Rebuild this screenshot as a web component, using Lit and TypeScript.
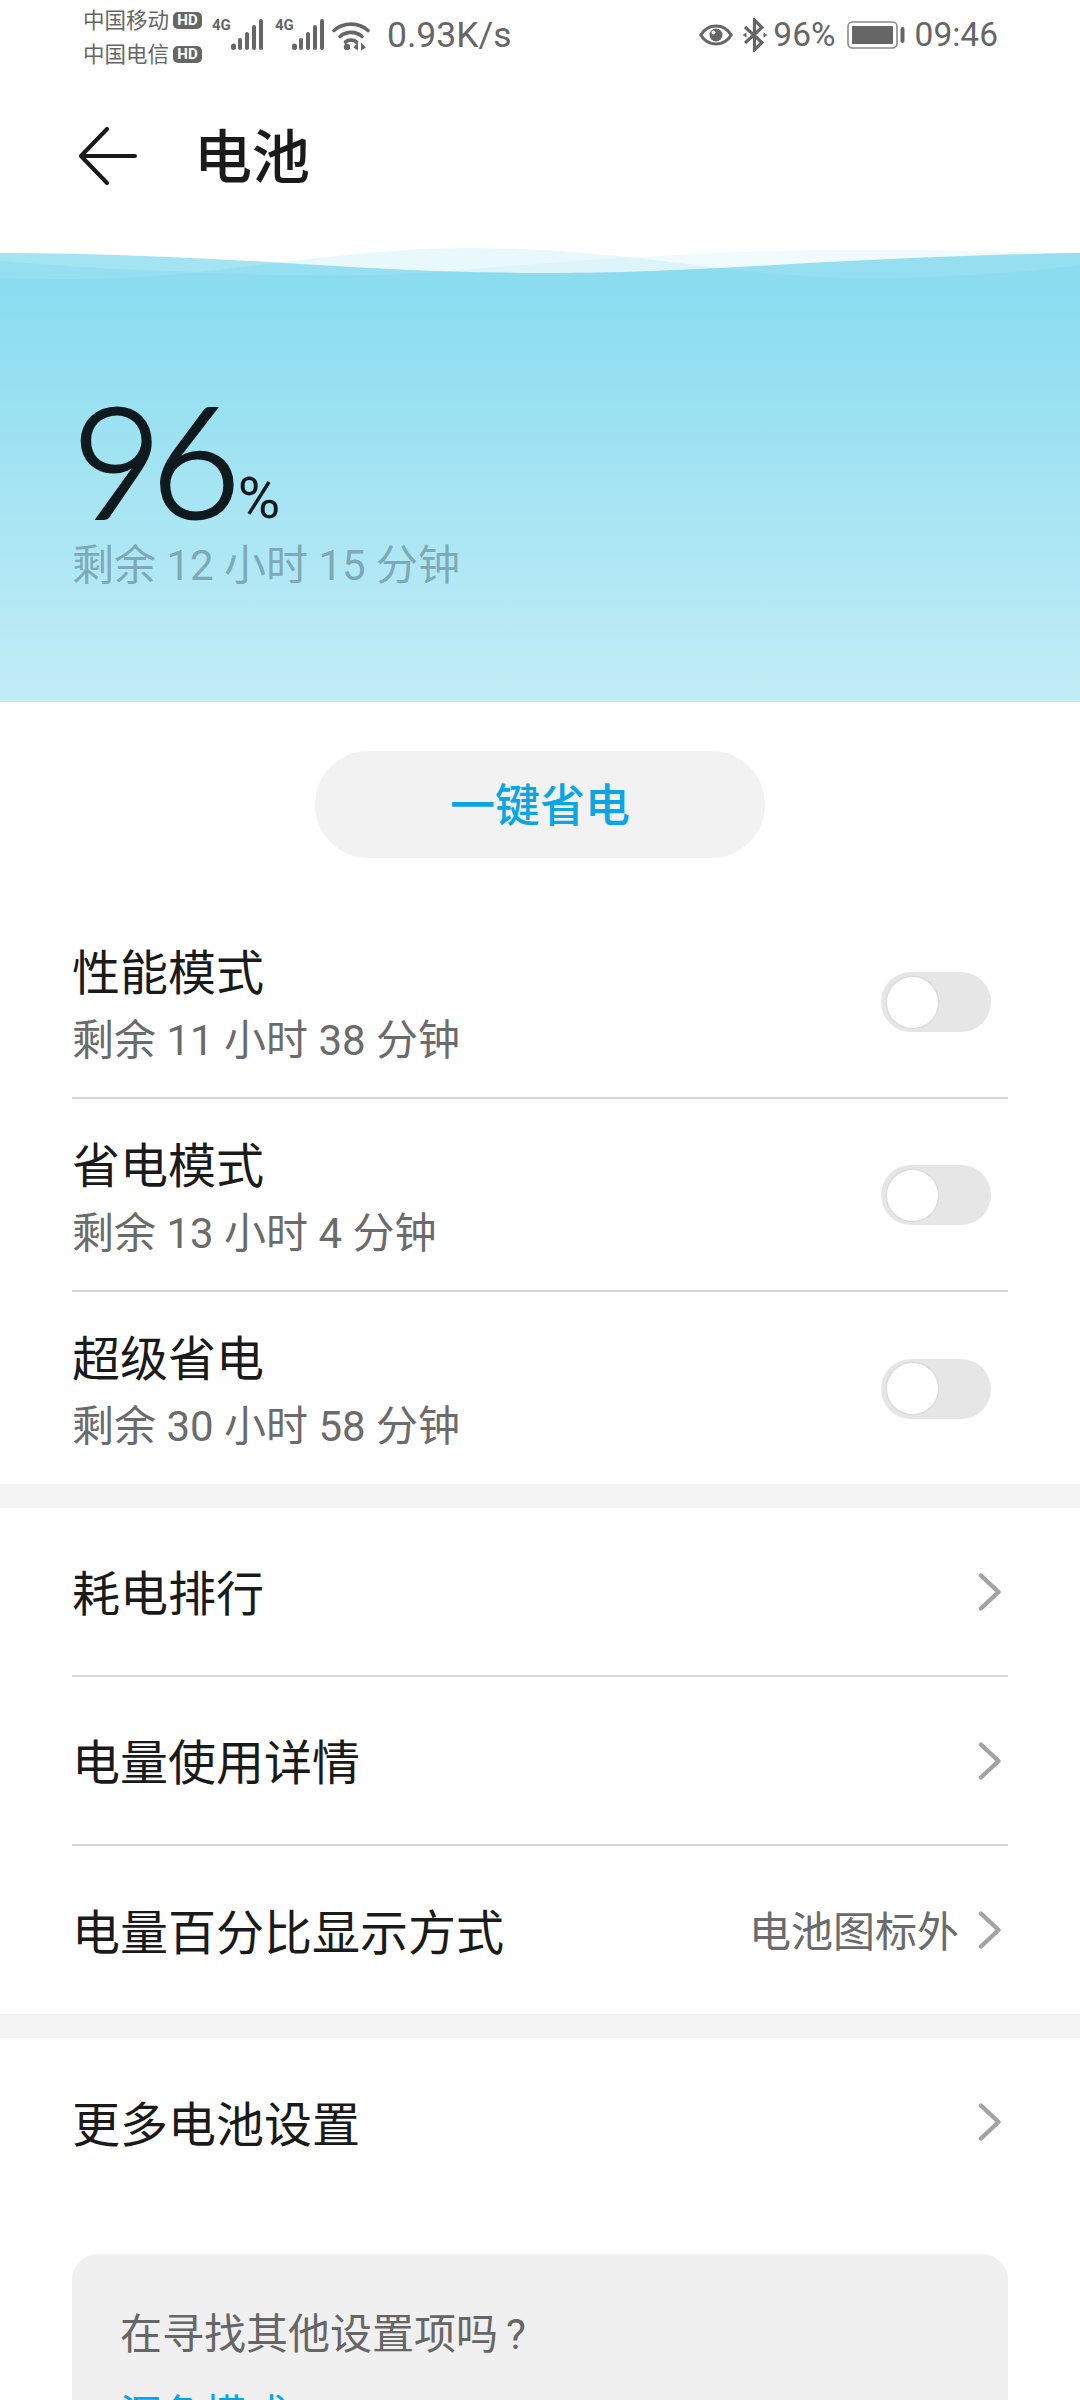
import { LitElement, css, html, svg } from "lit";
import { customElement } from "lit/decorators.js";

const mainEdge =
  "M0 253C90 253 180 257 270 262C360 268 450 273 540 273C610 273 660 271 720 268C830 262 950 255 1080 253V290H0Z";
const backEdge =
  "M0 278C60 280 130 280 200 272C290 262 380 248 470 248C560 248 640 258 720 268C790 276 840 279 890 278C960 277 1030 272 1080 265V290H0Z";
const farEdge =
  "M0 261C60 266 120 270 172 271C260 276 370 278 448 271C510 266 570 261 640 257C720 252 790 250 860 250C950 250 1020 252 1080 253V290H0Z";

const chevron = html`<svg class="chevron" viewBox="0 0 24 38" aria-hidden="true">
  <path d="M3 2.5 20.5 19 3 35.5" fill="none" stroke="#a3a3a3" stroke-width="4.4" stroke-linecap="round" stroke-linejoin="round" />
</svg>`;

const signal = html`<svg class="signal" viewBox="0 0 32 32" aria-hidden="true">
  <g fill="#666">
    <rect x="0" y="24.500" width="5" height="6.500" rx="2.500" />
    <rect x="7" y="19" width="4" height="12" rx="2" />
    <rect x="14" y="13" width="4" height="18" rx="2" />
    <rect x="21" y="6" width="4" height="25" rx="2" />
    <rect x="28" y="0" width="4" height="31" rx="2" />
  </g>
</svg>`;

@customElement("app-root")
export class AppRoot extends LitElement {
  static styles = css`
    :host {
      display: block;
      width: 1080px;
      height: 2400px;
      overflow: hidden;
      background: #fff;
      font-family: Roboto, "Noto Sans CJK SC", sans-serif;
      color: #1a1a1a;
    }

    .status {
      height: 70px;
      padding: 0 82px 0 83px;
      display: flex;
      justify-content: space-between;
      align-items: center;
      color: #666;
      box-sizing: border-box;
    }
    .status-left,
    .status-right {
      display: flex;
      align-items: center;
    }
    .carriers {
      display: flex;
      flex-direction: column;
      gap: 3px;
      font-size: 21.5px;
      line-height: 31px;
      margin-top: 4px;
    }
    .carrier {
      display: flex;
      align-items: center;
      gap: 4px;
    }
    .hd {
      width: 29px;
      height: 17px;
      border-radius: 5px;
      background: #666;
      color: #fff;
      font-size: 15px;
      line-height: 17px;
      font-weight: 700;
      text-align: center;
    }
    .net {
      display: flex;
      align-items: flex-end;
      height: 32px;
      position: relative;
      margin-left: 10px;
      padding-left: 19px;
    }
    .net + .net {
      margin-left: 12px;
      padding-left: 17px;
    }
    .net b {
      position: absolute;
      left: 0;
      top: -1px;
      font-size: 15px;
      line-height: 14px;
      font-weight: 700;
      letter-spacing: 0;
    }
    .signal {
      width: 32px;
      height: 32px;
      display: block;
    }
    .wifi {
      width: 38px;
      height: 30px;
      margin-left: 8px;
      margin-top: 2px;
      display: block;
    }
    .speed {
      font-size: 35.5px;
      margin-left: 17px;
      line-height: 40px;
    }
    .eye {
      width: 34px;
      height: 22px;
      display: block;
    }
    .bluetooth {
      width: 26px;
      height: 34px;
      margin-left: 9px;
      display: block;
    }
    .level {
      font-size: 33.5px;
      line-height: 40px;
      margin-left: 5px;
    }
    .battery {
      margin-left: 11px;
      display: block;
      width: 58px;
      height: 28px;
    }
    .clock {
      font-size: 33.5px;
      line-height: 40px;
      margin-left: 10px;
    }

    .toolbar {
      height: 175px;
      box-sizing: border-box;
      padding: 0 0 4px 79px;
      display: flex;
      align-items: center;
      gap: 57px;
    }
    .back {
      width: 58px;
      height: 58px;
      display: block;
    }
    .toolbar h1 {
      margin: 4px 0 0;
      font-size: 58px;
      line-height: 72px;
      font-weight: 500;
    }

    .wave {
      display: block;
      width: 1080px;
      height: 45px;
    }
    .hero {
      height: 412px;
      box-sizing: border-box;
      background: linear-gradient(#8adcf0, #c2edf6);
      padding: 88px 0 0 72px;
    }
    .reading {
      display: flex;
      align-items: baseline;
      height: 160px;
      color: #0f1a1e;
    }
    .reading .value {
      font-family: Lato, Roboto, sans-serif;
      font-size: 155px;
      line-height: 160px;
      font-weight: 300;
      letter-spacing: -11px;
      -webkit-text-stroke: 3px #0f1a1e;
    }
    .reading .unit {
      font-size: 58px;
      line-height: 58px;
      margin-left: 8px;
    }
    .hero .left {
      margin: 0;
      font-size: 42px;
      line-height: 56px;
      color: #7fa9b6;
    }

    .saver {
      display: flex;
      justify-content: center;
      padding: 49px 0 48px;
    }
    .saver button {
      width: 450px;
      height: 107px;
      border: none;
      border-radius: 54px;
      background: #f2f2f2;
      color: #0ba5e6;
      font: 500 45px "Noto Sans CJK SC", sans-serif;
      padding: 0 0 4px;
    }

    .modes,
    .links {
      padding: 0 72px;
    }
    .mode {
      height: 193px;
      box-sizing: border-box;
      border-bottom: 2px solid #d6d6d6;
      display: flex;
      align-items: center;
      justify-content: space-between;
      padding: 6px 17px 0 0;
    }
    .mode:last-child {
      height: 192px;
      border-bottom: none;
    }
    .mode .name {
      font-size: 48px;
      line-height: 64px;
      margin-top: 1px;
    }
    .mode .left {
      font-size: 42px;
      line-height: 56px;
      margin-top: 7px;
      color: #6b6b6b;
    }
    .switch {
      width: 110px;
      height: 60px;
      margin-top: -5px;
      border-radius: 30px;
      background: #e6e6e6;
      padding: 4.5px 6px;
      box-sizing: border-box;
    }
    .switch::before {
      content: "";
      display: block;
      width: 51px;
      height: 51px;
      border-radius: 50%;
      background: #fff;
      box-shadow: 0 0 0 1.5px #dcdcdc;
    }

    .band {
      height: 24px;
      background: #f3f3f3;
    }
    .link {
      height: 169px;
      box-sizing: border-box;
      border-bottom: 2px solid #d6d6d6;
      display: flex;
      align-items: center;
      justify-content: space-between;
      font-size: 48px;
      padding-right: 6px;
    }
    .link:last-child {
      height: 168px;
      border-bottom: none;
    }
    .link .label {
      margin-bottom: 3px;
    }
    .link .trail {
      display: flex;
      align-items: center;
      gap: 19px;
      font-size: 42px;
      color: #6b6b6b;
    }
    .chevron {
      width: 24px;
      height: 38px;
      display: block;
    }

    .more {
      margin: 48px 72px 0;
      padding: 57px 48px 60px;
      background: #f0f0f0;
      border-radius: 26px 26px 0 0;
      font-size: 42px;
      line-height: 48px;
      color: #666;
    }
    .more .mark {
      margin-left: 8px;
    }
    .more a {
      display: block;
      margin-top: 33px;
      color: #0ba5e6;
    }
  `;

  private renderWave() {
    return html`<svg class="wave" viewBox="0 245 1080 45" aria-hidden="true">
      <defs>
        <clipPath id="under-main"><path d=${mainEdge} /></clipPath>
      </defs>
      ${svg`
        <path d=${farEdge} fill="rgb(138 220 240 / 0.12)" />
        <path d=${backEdge} fill="rgb(138 220 240 / 0.2)" />
        <path d=${mainEdge} fill="#a3e3f2" />
        <g clip-path="url(#under-main)">
          <path d=${farEdge} fill="rgb(100 208 238 / 0.2)" />
          <path d=${backEdge} fill="rgb(100 208 238 / 0.2)" />
        </g>
      `}
    </svg>`;
  }

  private renderStatus() {
    return html`<div class="status">
      <div class="status-left">
        <div class="carriers">
          <div class="carrier">中国移动<span class="hd">HD</span></div>
          <div class="carrier">中国电信<span class="hd">HD</span></div>
        </div>
        <div class="net"><b>4G</b>${signal}</div>
        <div class="net"><b>4G</b>${signal}</div>
        <svg class="wifi" viewBox="0 0 38 30" aria-hidden="true">
          <g fill="none" stroke="#666" stroke-width="3.600" stroke-linecap="round">
            <path d="M2 9.500C11.500 1 26.500 1 36 9.500" />
            <path d="M8 15.500C14 10 24 10 30 15.500" />
            <path d="M13.500 21C16.500 18.500 21.500 18.500 24.500 21" />
          </g>
          <circle cx="15" cy="26" r="3.200" fill="#666" />
          <path d="M26 21.500V29.500L21.500 26.500ZM29 21.500V29.500L34 26.500Z" fill="#666" />
        </svg>
        <span class="speed">0.93K/s</span>
      </div>
      <div class="status-right">
        <svg class="eye" viewBox="0 0 34 22" aria-hidden="true">
          <path d="M1.800 11C9 -1 25 -1 32.200 11C25 23 9 23 1.800 11Z" fill="none" stroke="#666" stroke-width="3" />
          <circle cx="17" cy="11" r="6.500" fill="#666" />
          <circle cx="14.500" cy="8.500" r="2" fill="#fff" />
        </svg>
        <svg class="bluetooth" viewBox="0 0 26 34" aria-hidden="true">
          <path d="M3 9 20 24.500 12.500 32V2L20 9.500 3 25" fill="none" stroke="#666" stroke-width="3.200" />
          <path d="M21.500 14.500 25.500 17 21.500 19.500ZM4.500 14.500 0.500 17 4.500 19.500Z" fill="#666" />
        </svg>
        <span class="level">96%</span>
        <svg class="battery" viewBox="0 0 58 28" aria-hidden="true">
          <rect x="1" y="1" width="49" height="26" rx="4.500" fill="none" stroke="#8a8a8a" stroke-width="1.600" />
          <rect x="5" y="5" width="41" height="18" rx="1" fill="#666" />
          <rect x="53.500" y="6" width="4" height="16" rx="2" fill="#666" />
        </svg>
        <span class="clock">09:46</span>
      </div>
    </div>`;
  }

  private renderMode(name: string, left: string) {
    return html`<div class="mode">
      <div>
        <div class="name">${name}</div>
        <div class="left">${left}</div>
      </div>
      <div class="switch"></div>
    </div>`;
  }

  private renderLink(name: string, value = "") {
    return html`<div class="link">
      <span class="label">${name}</span>
      <span class="trail"><span class="label">${value}</span>${chevron}</span>
    </div>`;
  }

  render() {
    return html`
      ${this.renderStatus()}
      <div class="toolbar">
        <svg class="back" viewBox="0 0 58 58" aria-hidden="true">
          <path d="M28 2 2 29 28 56M2.500 29H56" fill="none" stroke="#1a1a1a" stroke-width="4" stroke-linecap="round" stroke-linejoin="round" />
        </svg>
        <h1>电池</h1>
      </div>
      ${this.renderWave()}
      <div class="hero">
        <div class="reading"><span class="value">96</span><span class="unit">%</span></div>
        <p class="left">剩余 12 小时 15 分钟</p>
      </div>
      <div class="saver"><button>一键省电</button></div>
      <div class="modes">
        ${this.renderMode("性能模式", "剩余 11 小时 38 分钟")}
        ${this.renderMode("省电模式", "剩余 13 小时 4 分钟")}
        ${this.renderMode("超级省电", "剩余 30 小时 58 分钟")}
      </div>
      <div class="band"></div>
      <div class="links">
        ${this.renderLink("耗电排行")}
        ${this.renderLink("电量使用详情")}
        ${this.renderLink("电量百分比显示方式", "电池图标外")}
      </div>
      <div class="band"></div>
      <div class="links">${this.renderLink("更多电池设置")}</div>
      <div class="more">
        在寻找其他设置项吗<span class="mark">?</span>
        <a>深色模式</a>
      </div>
    `;
  }
}
